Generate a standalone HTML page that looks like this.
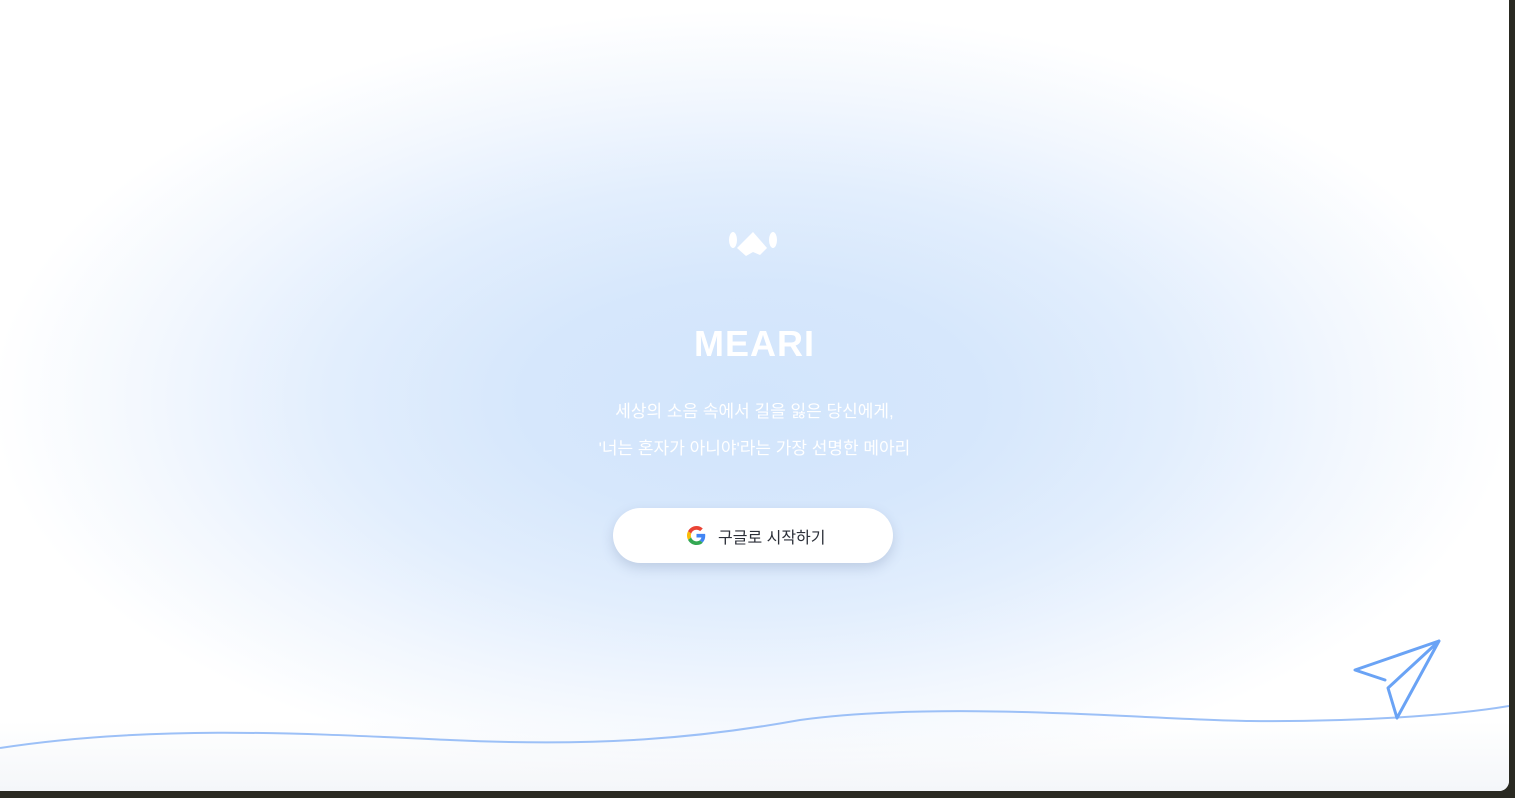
<!DOCTYPE html>
<html><head><meta charset="utf-8"><style>
html,body{margin:0;padding:0;width:1515px;height:798px;overflow:hidden;background:#2a2a22;}
.card{position:absolute;left:0;top:0;width:1509px;height:791px;background:#fff;border-radius:0 0 10px 0;overflow:hidden;}
.glow{position:absolute;left:0;top:0;width:1509px;height:791px;
background:radial-gradient(ellipse 760px 390px at 752px 400px, #d2e5fc 0%, #d6e7fc 30%, #e2eefd 55%, #f2f7fe 78%, rgba(255,255,255,0) 100%);}
.bottomfade{position:absolute;left:0;bottom:0;width:100%;height:70px;background:linear-gradient(#fff0,#f4f6f9);}
.t{position:absolute;left:0;width:1509px;text-align:center;color:#fff;font-family:"Liberation Sans","Noto Sans CJK KR",sans-serif;}
.title{top:323px;font-size:36px;font-weight:bold;letter-spacing:1px;}
.l1{top:397px;font-size:17px;}
.l2{top:434px;font-size:17px;}
.btn{position:absolute;left:613px;top:508px;width:280px;height:55px;border-radius:28px;background:#fff;box-shadow:0 5px 12px rgba(80,100,140,0.22);
font-family:"Liberation Sans","Noto Sans CJK KR",sans-serif;font-size:16px;color:#2b2f38;}
.btn span{position:absolute;left:105px;top:16px;}
.btn svg{position:absolute;left:74px;top:18px;}
</style></head><body>
<div class="card">
<div class="glow"></div>
<div class="bottomfade"></div>
<svg style="position:absolute;left:0;top:0" width="1509" height="791">
<g fill="#fff">
<ellipse cx="733" cy="240" rx="4" ry="8"/>
<ellipse cx="773" cy="240" rx="4" ry="8"/>
<path d="M753 232 L767 248 L760 255 L753 252 L746 256 L737 248 Z"/>
</g>
<path d="M0 748 C150 725 300 733 450 740 C600 747 700 738 800 720 C950 700 1150 720 1250 721 C1350 722 1450 716 1509 706" fill="none" stroke="#9cc0f7" stroke-width="2"/>
<g fill="none" stroke="#6aa3f5" stroke-width="3" stroke-linejoin="round" stroke-linecap="round">
<path d="M1385 680 L1355 670 L1439 641 L1397 718 L1388 688 L1439 641"/>
</g>
</svg>
<div class="t title">MEARI</div>
<div class="t l1">세상의 소음 속에서 길을 잃은 당신에게,</div>
<div class="t l2">'너는 혼자가 아니야'라는 가장 선명한 메아리</div>
<div class="btn">
<svg width="19" height="19" viewBox="0 0 48 48">
<path fill="#EA4335" d="M24 9.5c3.5 0 6.6 1.2 9.1 3.6l6.8-6.8C35.8 2.4 30.3 0 24 0 14.6 0 6.6 5.4 2.6 13.2l7.9 6.2C12.4 13.7 17.7 9.5 24 9.5z"/>
<path fill="#4285F4" d="M46.1 24.5c0-1.6-.1-3.1-.4-4.5H24v9h12.4c-.5 2.9-2.2 5.300-4.600 7l7.5 5.8c4.4-4 6.8-10 6.8-17.3z"/>
<path fill="#FBBC05" d="M10.5 28.6c-.5-1.4-.8-3-.8-4.6s.3-3.2.8-4.6l-7.9-6.2C.9 16.5 0 20.1 0 24s.9 7.5 2.6 10.8l7.9-6.2z"/>
<path fill="#34A853" d="M24 48c6.5 0 11.9-2.1 15.9-5.8l-7.5-5.8c-2.1 1.4-4.8 2.3-8.4 2.3-6.3 0-11.6-4.2-13.5-10l-7.9 6.2C6.6 42.6 14.6 48 24 48z"/>
</svg>
<span>구글로 시작하기</span>
</div>
</div>
</body></html>
